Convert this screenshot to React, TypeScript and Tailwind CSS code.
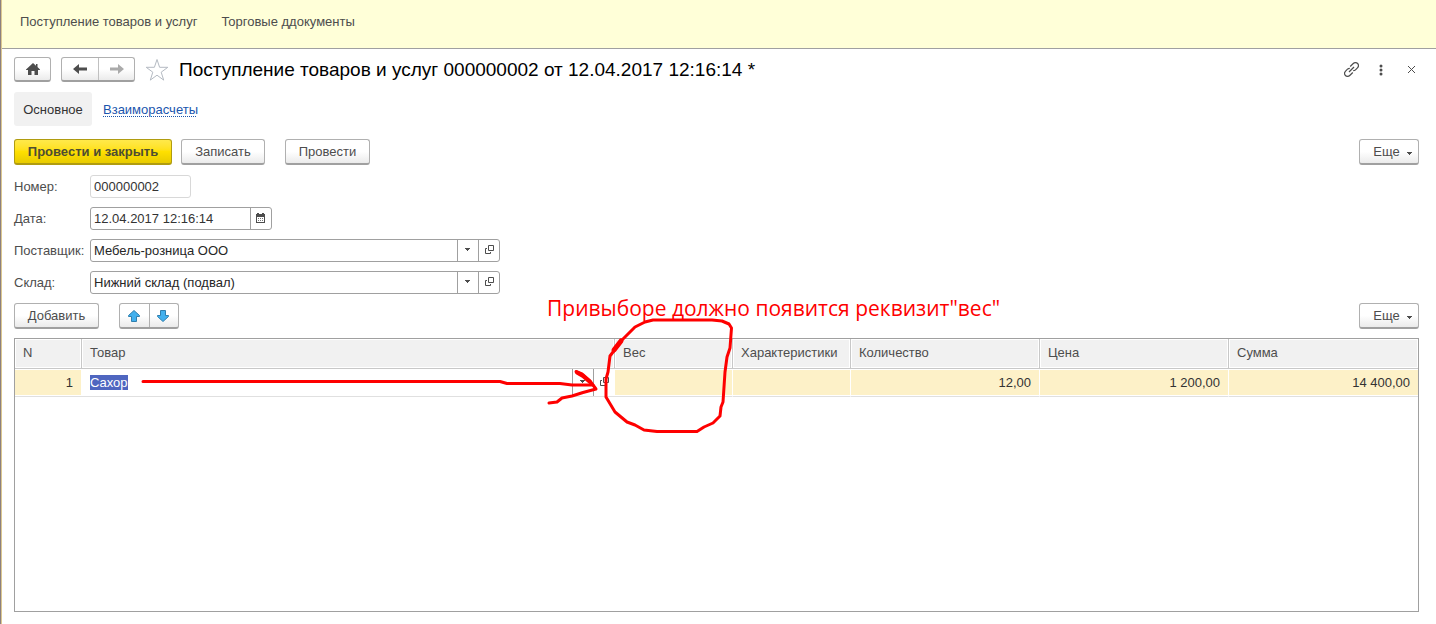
import React, { useEffect, useRef } from 'react';

const outlineButton =
  'rounded-[3px] border border-[#b0b0b0] border-b-2 border-b-[#a0a0a0] bg-gradient-to-b from-white from-50% to-[#ebebeb] text-[#4d4d4d]';

const HomeIcon = () => (
  <svg width="14" height="12" viewBox="0 0 14 12" fill="#4d4d4d">
    <path d="M7 0 0 6.500V7h2v5h3.500V8h3v4H12V7h2v-.5l-2.500-2.500V1H10v1.800z" />
  </svg>
);

const ArrowIcon: React.FC<{ flip?: boolean }> = ({ flip }) => (
  <svg width="14" height="10" viewBox="0 0 14 10" fill={flip ? '#aaa' : '#4d4d4d'}>
    <path d={flip ? 'M14 5 8 0v3.500H0v3h8V10z' : 'M0 5 6 0v3.500h8v3H6V10z'} />
  </svg>
);

const StarIcon = () => (
  <svg width="24" height="24" viewBox="0 0 24 24" fill="none" stroke="#b4bac2">
    <path d="m12 1.500 2.600 7.800h8.200l-6.600 4.900 2.500 7.900-6.700-4.900-6.700 4.900 2.500-7.900-6.600-4.900h8.200z" />
  </svg>
);

const LinkIcon = () => (
  <svg width="15" height="15" viewBox="0 0 15 15" fill="none" stroke="#4d4d4d" strokeWidth="1.200">
    <path d="M6.200 4.500 9 1.800c1.500-1.500 3.500-1.500 4.600-.3s1.100 3-.2 4.400L11.500 7.800c-.6.600-1.200.9-2.300.9" />
    <path d="M8.800 10.500 6 13.200c-1.500 1.500-3.500 1.500-4.600.3s-1.100-3 .2-4.400L3.500 7.200c.6-.6 1.200-.9 2.300-.9" />
    <path d="m5 10 5-5" />
  </svg>
);

const CalendarIcon = () => (
  <svg width="9" height="10" viewBox="0 0 9 10" fill="#4d4d4d">
    <path d="M0 1h1V0h2v1h3V0h2v1h1v9H0zm1 3v5h7V4z" fillRule="evenodd" />
    <path d="M2 5h1v1H2zM4 5h1v1H4zM6 5h1v1H6zM2 7h1v1H2zM4 7h1v1H4zM6 7h1v1H6z" fill="#777" />
  </svg>
);

const OpenIcon = () => (
  <svg width="9" height="9" viewBox="0 0 9 9" fill="none" stroke="#4d4d4d">
    <path d="M3.500 0.500h5v5h-5zM2 3.500H0.500v5h5V7" />
  </svg>
);

const Caret: React.FC<{ className?: string }> = ({ className }) => (
  <svg className={className} width="5" height="3" viewBox="0 0 5 3" fill="#4d4d4d">
    <path d="M0 0h5v1H4v1H3v1H2V2H1V1H0z" />
  </svg>
);

const MoveIcon: React.FC<{ down?: boolean }> = ({ down }) => (
  <svg width="12" height="12" viewBox="0 0 12 12" fill="#42b0ee" stroke="#2f7fae">
    <path
      d={
        down
          ? 'M6 11.500 0.500 6.500V5.500H3.500V0.500h5v5h3v1z'
          : 'M6 0.500 0.500 5.500v1h3v5h5v-5h3v-1z'
      }
    />
  </svg>
);

const MoreButton = () => (
  <button className={`${outlineButton} flex h-[26px] w-[60px] items-center justify-center gap-[7px] pl-[7px]`}>
    Еще
    <Caret className="mt-1" />
  </button>
);

const FieldButtons = () => (
  <>
    <button
      type="button"
      aria-label="Выбрать"
      className="flex w-[21px] shrink-0 items-center justify-center border-l border-[#a0a0a0] pr-px pb-[2px]"
    >
      <Caret />
    </button>
    <button
      type="button"
      aria-label="Открыть"
      className="flex w-[21px] shrink-0 items-center justify-center border-l border-[#a0a0a0] pb-[2px]"
    >
      <OpenIcon />
    </button>
  </>
);

interface LookupFieldProps {
  id: string;
  label: string;
  value: string;
}

const LookupField: React.FC<LookupFieldProps> = ({ id, label, value }) => (
  <div className="flex h-[23px] items-center">
    <label htmlFor={id} className="w-[76px] shrink-0">
      {label}
    </label>
    <div className="flex h-full w-[410px] rounded-[3px] border border-[#a0a0a0]">
      <input id={id} defaultValue={value} className="min-w-0 grow px-[3px] text-[#262626] outline-none" />
      <FieldButtons />
    </div>
  </div>
);

const columns = [
  { title: 'N', width: 'w-[67px]' },
  { title: 'Товар', width: '' },
  { title: 'Вес', width: 'w-[118px]' },
  { title: 'Характеристики', width: 'w-[118px]' },
  { title: 'Количество', width: 'w-[189px]' },
  { title: 'Цена', width: 'w-[189px]' },
  { title: 'Сумма', width: 'w-[189px]' },
];

const values = ['', '', '12,00', '1 200,00', '14 400,00'];

const GoodsTable = () => {
  const productRef = useRef<HTMLInputElement>(null);

  useEffect(() => {
    productRef.current?.focus();
    productRef.current?.select();
  }, []);

  return (
    <table className="w-full table-fixed border-separate border-spacing-0">
      <thead>
        <tr>
          {columns.map((column) => (
            <th
              key={column.title}
              className={`${column.width} border-r border-b border-[#c8c8c8] bg-[#f1f1f1] bg-clip-content p-px text-left font-normal last:border-r-0`}
            >
              <div className="h-[27px] px-[7px] leading-[26px]">{column.title}</div>
            </th>
          ))}
        </tr>
      </thead>
      <tbody className="text-[#333]">
        <tr>
          <td className="border-b border-[#e0e0e0] bg-[#fdf1c8] bg-clip-content py-px pr-px">
            <div className="h-[25px] px-2 text-right leading-[26px]">1</div>
          </td>
          <td className="border-b border-[#e0e0e0] pr-px">
            <div className="flex h-[27px]">
              <input
                ref={productRef}
                aria-label="Товар"
                defaultValue="Сахор"
                className="min-w-0 grow pl-2 outline-none selection:bg-[#4f66c0] selection:text-white"
              />
              <FieldButtons />
            </div>
          </td>
          {values.map((value, index) => (
            <td
              key={index}
              className="border-r border-b border-r-white border-b-[#e0e0e0] bg-[#fdf1c8] bg-clip-content py-px last:border-r-0"
            >
              <div className="h-[25px] px-2 text-right leading-[26px]">{value}</div>
            </td>
          ))}
        </tr>
      </tbody>
    </table>
  );
};

// Red marker drawing over the table: arrow from the product to the weight column
const Annotation = () => (
  <div className="pointer-events-none absolute top-[-9px] left-[122px] text-[#fe0000]">
    <p className="ml-[411px] font-['Open_Sans','Noto_Sans',sans-serif] text-[21px] leading-[28px] whitespace-nowrap">
      Привыборе должно появится реквизит"вес"
    </p>
    <svg
      className="absolute top-6 left-0"
      width="600"
      height="118"
      viewBox="136 318 600 118"
      fill="none"
      stroke="#fe0000"
      strokeWidth="3"
      strokeLinecap="round"
      strokeLinejoin="round"
    >
      <path d="M143 381.500H500L507 383.500H560L572 385H593" />
      <path d="M576 371.500 582 374 590 381 596 389 583 392.500 572 396 562 398 557 402 549 403" />
      <path d="M577 372.500 583 376 590 382" strokeWidth="4" />
      <path d="M622 340 610 356 608 372 606 379V397L615 412 627 422 635 425 644 430 657 431.500H697L704 427 713 423 720 416 721 407 723 402 725 372 727 357 730 348 731.500 328 729 324 722 321 712 320H653L645 322 635 327z" />
      <path d="M621 341 614 350" strokeWidth="5" />
    </svg>
  </div>
);

export default function App() {
  return (
    <div className="flex min-h-screen border-l border-[#8c8080] bg-white font-['Liberation_Sans',Arial,sans-serif] text-[13px] leading-[15px] text-[#4d4d4d]">
      <div className="flex grow flex-col border-l border-[#dcc890]">
        <nav className="flex h-[49px] gap-6 border-b border-[#a0a0a0] bg-[#ffffd8] pt-[14px] pl-[18px]">
          <a href="#receipt">Поступление товаров и услуг</a>
          <a href="#documents">Торговые ддокументы</a>
        </nav>

        <main className="flex grow flex-col pt-2 pr-[17px] pb-3 pl-3">
          <header className="flex h-[25px] items-center">
            <button aria-label="Домой" className={`${outlineButton} flex h-[25px] w-[37px] items-center justify-center`}>
              <HomeIcon />
            </button>
            <div className={`${outlineButton} ml-[10px] flex h-[25px] w-[74px]`}>
              <button aria-label="Назад" className="flex w-[36px] items-center justify-center">
                <ArrowIcon />
              </button>
              <button aria-label="Вперед" className="flex grow items-center justify-center border-l border-[#c0c0c0]">
                <ArrowIcon flip />
              </button>
            </div>
            <button aria-label="В избранное" className="ml-[10px]">
              <StarIcon />
            </button>
            <h1 className="ml-[10px] text-[19px] leading-[24px] text-black">
              Поступление товаров и услуг 000000002 от 12.04.2017 12:16:14 *
            </h1>
            <div className="mr-[3px] ml-auto flex items-center">
              <button aria-label="Ссылка">
                <LinkIcon />
              </button>
              <button aria-label="Меню" className="ml-5">
                <svg width="4" height="12" viewBox="0 0 4 12" fill="#4d4d4d">
                  <circle cx="2" cy="2" r="1.500" />
                  <circle cx="2" cy="6" r="1.500" />
                  <circle cx="2" cy="10" r="1.500" />
                </svg>
              </button>
              <button aria-label="Закрыть" className="ml-6">
                <svg width="9" height="9" viewBox="0 0 9 9" stroke="#4d4d4d">
                  <path d="m1 1 7 7M8 1 1 8" />
                </svg>
              </button>
            </div>
          </header>

          <div className="mt-[10px] flex h-[34px] items-center">
            <button className="h-full w-[78px] rounded-[3px] bg-[#f1f1f1] text-[#333]">Основное</button>
            <a
              href="#settlements"
              className="ml-[11px] text-[#1a55ad] underline decoration-dotted decoration-1 underline-offset-2"
            >
              Взаиморасчеты
            </a>
          </div>

          <div className="mt-[13px] flex">
            <button className="h-[26px] w-[158px] rounded-[3px] border border-b-2 border-[#b09c10] bg-gradient-to-b from-[#ffe94a] via-[#ffe000] to-[#e8cb00] font-bold text-[#4d4d33]">
              Провести и закрыть
            </button>
            <button className={`${outlineButton} ml-[9px] h-[26px] w-[84px]`}>Записать</button>
            <button className={`${outlineButton} mr-auto ml-5 h-[26px] w-[85px]`}>Провести</button>
            <MoreButton />
          </div>

          <form className="mt-[10px] flex flex-col gap-[9px]">
            <div className="flex h-[23px] items-center">
              <label htmlFor="number" className="w-[76px] shrink-0">
                Номер:
              </label>
              <input
                id="number"
                defaultValue="000000002"
                className="h-full w-[101px] rounded-[3px] border border-[#d8d8d8] px-[3px] text-[#333] outline-none"
              />
            </div>
            <div className="flex h-[23px] items-center">
              <label htmlFor="date" className="w-[76px] shrink-0">
                Дата:
              </label>
              <div className="flex h-full w-[182px] rounded-[3px] border border-[#a0a0a0]">
                <input
                  id="date"
                  defaultValue="12.04.2017 12:16:14"
                  className="min-w-0 grow px-[3px] text-[#333] outline-none"
                />
                <button
                  type="button"
                  aria-label="Календарь"
                  className="flex w-[21px] shrink-0 items-center justify-center border-l border-[#a0a0a0] pr-px pb-[2px]"
                >
                  <CalendarIcon />
                </button>
              </div>
            </div>
            <LookupField id="supplier" label="Поставщик:" value="Мебель-розница ООО" />
            <LookupField id="warehouse" label="Склад:" value="Нижний склад (подвал)" />
          </form>

          <section className="relative mt-[9px] flex grow flex-col">
            <div className="flex">
              <button className={`${outlineButton} h-[26px] w-[85px]`}>Добавить</button>
              <div className={`${outlineButton} mr-auto ml-5 flex h-[26px] w-[60px]`}>
                <button aria-label="Вверх" className="flex w-[29px] items-center justify-center pr-px">
                  <MoveIcon />
                </button>
                <button aria-label="Вниз" className="flex grow items-center justify-center border-l border-[#b0b0b0] pr-[2px]">
                  <MoveIcon down />
                </button>
              </div>
              <MoreButton />
            </div>
            <div className="mt-[9px] grow border border-[#a0a0a0]">
              <GoodsTable />
            </div>
            <Annotation />
          </section>
        </main>
      </div>
    </div>
  );
}
